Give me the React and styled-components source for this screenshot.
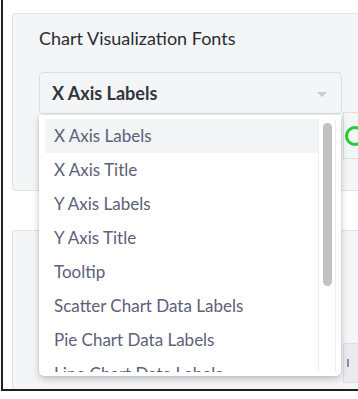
import React from "react";
import styled, { createGlobalStyle } from "styled-components";

const GlobalStyle = createGlobalStyle`
  body {
    margin: 0;
    background: #fff;
    font-family: Lato, "Open Sans", sans-serif;
  }
`;

const Frame = styled.div`
  position: relative;
  width: 348px;
  height: 376px;
  margin-left: 1px;
  border: 2px solid #1f1f1f;
  border-top: none;
  box-shadow: 3px 3px 4px rgba(0, 0, 0, 0.45);
  background: #fff;
  overflow: hidden;
  padding: 13px 0 0 9px;
  box-sizing: content-box;
`;

const Panel = styled.div`
  width: 380px;
  height: ${({ tall }) => (tall ? "200px" : "178px")};
  margin-top: ${({ gap }) => gap || 0}px;
  background: #f4f5f7;
  border: 1px solid #e1e3e7;
  border-radius: 3px;
  padding: 13px 0 0 26px;
  box-sizing: border-box;
`;

const Title = styled.div`
  font-size: 18px;
  line-height: 22px;
  color: #2b2d33;
`;

const Row = styled.div`
  display: flex;
  align-items: flex-start;
  gap: 1px;
  margin-top: ${({ top }) => top || 0}px;
`;

const SelectWrap = styled.div`
  position: relative;
  width: 303px;
  flex-shrink: 0;
`;

const Select = styled.div`
  height: 42px;
  display: flex;
  align-items: center;
  justify-content: space-between;
  padding: 0 14px 0 12px;
  background: #f4f5f7;
  border: 1px solid #dcdee3;
  border-radius: 4px;
  box-sizing: border-box;
  font-size: 18px;
  font-weight: 700;
  color: #33353c;
`;

const Caret = styled.span`
  width: 0;
  height: 0;
  border-left: 5px solid transparent;
  border-right: 5px solid transparent;
  border-top: 5px solid #c9cbd0;
  margin-top: 2px;
`;

const Menu = styled.div`
  position: absolute;
  top: calc(100% + 1px);
  left: 0;
  width: 302px;
  height: 261px;
  display: flex;
  padding: 4px 5px 4px 6px;
  box-sizing: border-box;
  background: #fff;
  border-radius: 0 0 5px 5px;
  box-shadow: 0 3px 7px rgba(0, 0, 0, 0.22), 0 0 2px rgba(0, 0, 0, 0.08);
  z-index: 5;
`;

const Options = styled.div`
  width: 273px;
  height: 253px;
  overflow: hidden;
`;

const Option = styled.div`
  height: 34px;
  line-height: 34px;
  padding-left: 9px;
  font-size: 17px;
  color: #5c6079;
  white-space: nowrap;
  background: ${({ active }) => (active ? "#f3f4f6" : "transparent")};
`;

const Track = styled.div`
  width: 18px;
  height: 253px;
  border-left: 1px solid #ededef;
  border-right: 1px solid #ededef;
  box-sizing: border-box;
  padding: 4px 3px 0 4px;
`;

const Thumb = styled.div`
  height: 163px;
  border-radius: 6px;
  background: #c2c2c4;
`;

const Side = styled.div`
  flex: 1;
  padding-top: ${({ top }) => top}px;
`;

const SideBox = styled.div`
  height: ${({ h }) => h}px;
  border: 1px solid #dcdee3;
  border-right: none;
  background: ${({ dark }) => (dark ? "#eaebef" : "#f4f5f7")};
  display: flex;
  align-items: center;
  padding-left: 1px;
`;

const Ring = styled.span`
  flex-shrink: 0;
  width: 14px;
  height: 14px;
  border: 3px solid #1fd02a;
  border-radius: 50%;
`;

const Mark = styled.span`
  width: 2px;
  height: 8px;
  margin-left: 2px;
  background: #8a8d99;
`;

const options = [
  "X Axis Labels",
  "X Axis Title",
  "Y Axis Labels",
  "Y Axis Title",
  "Tooltip",
  "Scatter Chart Data Labels",
  "Pie Chart Data Labels",
  "Line Chart Data Labels",
  "Bar Chart Data Labels",
];

const App = () => {
  return (
    <>
      <GlobalStyle />
      <Frame>
        <Panel>
          <Title>Chart Visualization Fonts</Title>
          <Row top={23}>
            <SelectWrap>
              <Select>
                X Axis Labels
                <Caret />
              </Select>
              <Menu>
                <Options>
                  {options.map((o, i) => (
                    <Option key={o} active={i === 0}>
                      {o}
                    </Option>
                  ))}
                </Options>
                <Track>
                  <Thumb />
                </Track>
              </Menu>
            </SelectWrap>
            <Side top={40}>
              <SideBox h={45}>
                <Ring />
              </SideBox>
            </Side>
          </Row>
        </Panel>
        <Panel tall gap={39}>
          <Row>
            <SelectWrap />
            <Side top={99}>
              <SideBox h={38} dark>
                <Mark />
              </SideBox>
            </Side>
          </Row>
        </Panel>
      </Frame>
    </>
  );
};

export default App;
